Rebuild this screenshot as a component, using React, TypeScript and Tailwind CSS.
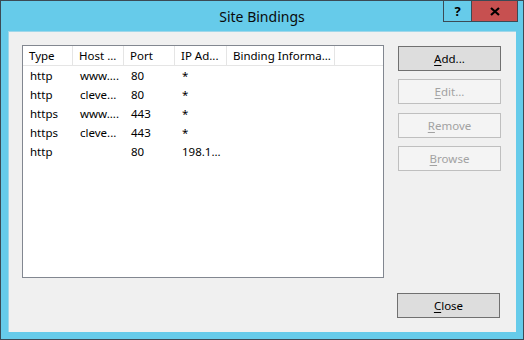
import React from 'react';

const columns = [
  { label: 'Type', width: 'w-[50px]' },
  { label: 'Host ...', width: 'w-[51px]' },
  { label: 'Port', width: 'w-[51px]' },
  { label: 'IP Ad...', width: 'w-[52px]' },
  { label: 'Binding Informa...', width: 'w-[108px]' },
];

const rows = [
  ['http', 'www....', '80', '*', ''],
  ['http', 'cleve...', '80', '*', ''],
  ['https', 'www....', '443', '*', ''],
  ['https', 'cleve...', '443', '*', ''],
  ['http', '', '80', '198.1...', ''],
];

interface DialogButtonProps {
  mnemonic: string;
  rest: string;
  disabled?: boolean;
  className?: string;
}

const DialogButton: React.FC<DialogButtonProps> = ({ mnemonic, rest, disabled, className = '' }) => (
  <button
    className={
      disabled
        ? `h-[25px] w-[103px] border border-[#bfbfbf] bg-[#f4f4f4] text-[#a2a2a2] text-[11.5px] leading-none ${className}`
        : `h-[25px] w-[103px] border border-[#707070] bg-[#dddddd] text-black text-[11.5px] leading-none ${className}`
    }
  >
    <u className="underline-offset-2">{mnemonic}</u>
    {rest}
  </button>
);

export default function App() {
  return (
    <div className="w-[524px] h-[340px] flex flex-col bg-[#66cbea] border border-[#3b4a55] font-['Segoe_UI','Noto_Sans',sans-serif] text-black">
      {/* title bar */}
      <div className="h-[30px] grid grid-cols-[1fr_auto_1fr] items-start">
        <div />
        <div className="h-[30px] flex items-center text-[14px] text-[#0a0a0a]">Site Bindings</div>
        <div className="flex justify-end pr-[5px] -mt-px">
          <div className="flex h-[22px] border border-[#3b4a55]">
            <div className="w-[28px] flex items-center justify-center border-r border-[#3b4a55] text-[13px] font-bold leading-none">
              ?
            </div>
            <div className="w-[45px] flex items-center justify-center bg-[#c75050]">
              <svg width="10" height="9" viewBox="0 0 10 9">
                <path d="M1 1 L9 8 M9 1 L1 8" stroke="#000" strokeWidth="2.2" />
              </svg>
            </div>
          </div>
        </div>
      </div>

      {/* client area */}
      <div className="mx-[7px] mb-[7px] flex-1 bg-[#f0f0f0] border-t border-l border-[#9fd7ea] pl-[13px] pt-[13px] flex flex-col">
        <div className="flex">
          <div className="w-[362px] h-[233px] border border-[#828790] bg-white text-[11.5px]">
            <div className="flex h-[20px] border-b border-[#e5e5e5]">
              {columns.map((c) => (
                <div key={c.label} className={`${c.width} h-full border-r border-[#e5e5e5] pl-[6px] flex items-center whitespace-nowrap`}>
                  {c.label}
                </div>
              ))}
            </div>
            {rows.map((r, i) => (
              <div key={i} className="flex h-[19px] items-center">
                {r.map((cell, j) => (
                  <div key={j} className={`${columns[j].width} pl-[7px] whitespace-nowrap`}>
                    {cell}
                  </div>
                ))}
              </div>
            ))}
          </div>
          <div className="ml-[14px] pt-px flex flex-col">
            <DialogButton mnemonic="A" rest="dd..." />
            <DialogButton mnemonic="E" rest="dit..." disabled className="mt-[8px]" />
            <DialogButton mnemonic="R" rest="emove" disabled className="mt-[9px]" />
            <DialogButton mnemonic="B" rest="rowse" disabled className="mt-[8px]" />
          </div>
        </div>
        <div className="flex justify-end mt-[15px] pr-[16px]">
          <DialogButton mnemonic="C" rest="lose" />
        </div>
      </div>
    </div>
  );
}
